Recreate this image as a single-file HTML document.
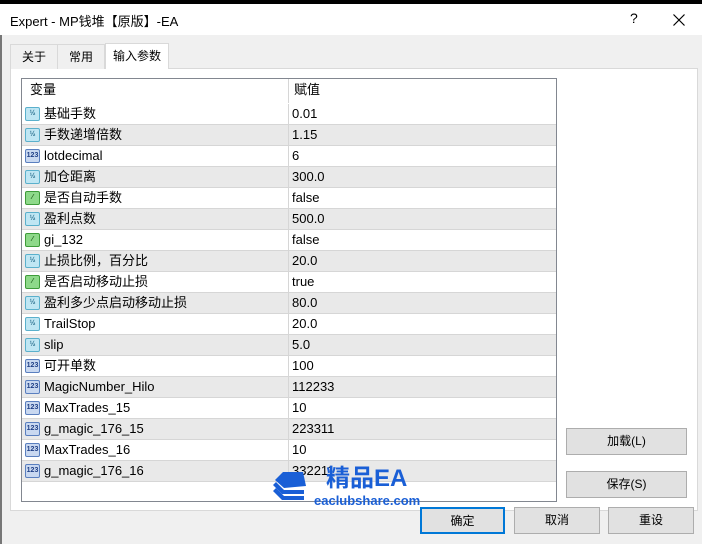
<!DOCTYPE html>
<html><head><meta charset="utf-8"><style>
*{box-sizing:border-box;margin:0;padding:0}
body{width:702px;height:544px;background:#f0f0f0;position:relative;overflow:hidden;font-family:"Liberation Sans","Noto Sans CJK SC",sans-serif;font-size:13px;color:#000}
.abs{position:absolute}
.top{left:0;top:0;width:702px;height:4px;background:#000}
.title{left:0;top:4px;width:702px;height:31px;background:#fff;font-size:13px}
.tab{top:44px;height:25px;border:1px solid #d9d9d9;border-bottom:none;background:#f0f0f0;text-align:center;line-height:24px;font-size:12px}
.panel{left:10px;top:68px;width:688px;height:443px;background:#fff;border:1px solid #d9d9d9}
.list{left:21px;top:78px;width:536px;height:424px;border:1px solid #828790;background:#fff;overflow:hidden}
.row{position:absolute;left:0;width:534px;height:21px;border-bottom:1px solid #d6d6d6;line-height:20px}
.row.g{background:#e9e9e9}
.c1{position:absolute;left:22px;top:0}
.c2{position:absolute;left:266px;top:0;border-left:1px solid #d6d6d6;padding-left:3px;height:21px}
.ic{position:absolute;left:3px;top:3px;width:15px;height:14px;border-radius:2px;font-size:7px;line-height:12px;text-align:center;font-weight:bold}
.d{background:#bfe6f3;border:1px solid #5ab0cc;color:#2a6f8e}
.n{background:#c9d8f0;border:1px solid #5a7fbf;color:#1f3f86}
.b{background:#8ed98a;border:1px solid #3e9c3a;color:#1b5a18}
.btn{height:27px;border:1px solid #adadad;background:#e1e1e1;text-align:center;line-height:25px;font-size:12px}
</style></head><body>
<div class="abs top"></div>
<div class="abs title"><span class="abs" style="left:10px;top:7px">Expert - MP钱堆【原版】-EA</span><span class="abs" style="left:630px;top:6px;font-size:14px">?</span><svg class="abs" style="left:673px;top:10px" width="12" height="12"><path d="M0.5 0.5L11.5 11.5M11.5 0.5L0.5 11.5" stroke="#000" stroke-width="1.2"/></svg></div>
<div class="abs" style="left:0;top:35px;width:2px;height:509px;background:#777"></div>
<div class="abs panel"></div>
<div class="abs tab" style="left:10px;width:48px">关于</div>
<div class="abs tab" style="left:57px;width:48px">常用</div>
<div class="abs tab" style="left:105px;width:64px;background:#fff;top:43px;height:26px">输入参数</div>
<div class="abs list">
<div class="row" style="top:0;height:24px;line-height:22px;border-bottom:none"><span class="c1" style="left:8px">变量</span><span class="c2" style="height:24px;padding-left:5px">赋值</span></div>
<div class="row" style="top:25px"><span class="ic d">½</span><span class="c1">基础手数</span><span class="c2">0.01</span></div>
<div class="row g" style="top:46px"><span class="ic d">½</span><span class="c1">手数递增倍数</span><span class="c2">1.15</span></div>
<div class="row" style="top:67px"><span class="ic n">123</span><span class="c1">lotdecimal</span><span class="c2">6</span></div>
<div class="row g" style="top:88px"><span class="ic d">½</span><span class="c1">加仓距离</span><span class="c2">300.0</span></div>
<div class="row" style="top:109px"><span class="ic b">⁄</span><span class="c1">是否自动手数</span><span class="c2">false</span></div>
<div class="row g" style="top:130px"><span class="ic d">½</span><span class="c1">盈利点数</span><span class="c2">500.0</span></div>
<div class="row" style="top:151px"><span class="ic b">⁄</span><span class="c1">gi_132</span><span class="c2">false</span></div>
<div class="row g" style="top:172px"><span class="ic d">½</span><span class="c1">止损比例，百分比</span><span class="c2">20.0</span></div>
<div class="row" style="top:193px"><span class="ic b">⁄</span><span class="c1">是否启动移动止损</span><span class="c2">true</span></div>
<div class="row g" style="top:214px"><span class="ic d">½</span><span class="c1">盈利多少点启动移动止损</span><span class="c2">80.0</span></div>
<div class="row" style="top:235px"><span class="ic d">½</span><span class="c1">TrailStop</span><span class="c2">20.0</span></div>
<div class="row g" style="top:256px"><span class="ic d">½</span><span class="c1">slip</span><span class="c2">5.0</span></div>
<div class="row" style="top:277px"><span class="ic n">123</span><span class="c1">可开单数</span><span class="c2">100</span></div>
<div class="row g" style="top:298px"><span class="ic n">123</span><span class="c1">MagicNumber_Hilo</span><span class="c2">112233</span></div>
<div class="row" style="top:319px"><span class="ic n">123</span><span class="c1">MaxTrades_15</span><span class="c2">10</span></div>
<div class="row g" style="top:340px"><span class="ic n">123</span><span class="c1">g_magic_176_15</span><span class="c2">223311</span></div>
<div class="row" style="top:361px"><span class="ic n">123</span><span class="c1">MaxTrades_16</span><span class="c2">10</span></div>
<div class="row g" style="top:382px"><span class="ic n">123</span><span class="c1">g_magic_176_16</span><span class="c2">332211</span></div>
</div>
<svg class="abs" style="left:270px;top:470px" width="40" height="34" viewBox="0 0 40 34"><path d="M3 21 L12 30 L34 30 L34 26 L14 26 L6 18Z" fill="#1a5fd6"/><path d="M3 15 L12 24 L34 24 L34 20 L14 20 L6 12Z" fill="#1a5fd6"/><path d="M5 10 L13 2 L33 2 L36 16 L14 18 Z" fill="#1a5fd6"/></svg>
<div class="abs" style="left:326px;top:464px;font-size:24px;font-weight:bold;color:#1a5fd6;line-height:30px">精品EA</div>
<div class="abs" style="left:314px;top:494px;font-size:13px;font-weight:bold;color:#1a5fd6;line-height:14px">eaclubshare.com</div>
<div class="abs btn" style="left:566px;top:428px;width:121px">加载(L)</div>
<div class="abs btn" style="left:566px;top:471px;width:121px">保存(S)</div>
<div class="abs btn" style="left:420px;top:507px;width:85px;border:2px solid #0078d7">确定</div>
<div class="abs btn" style="left:514px;top:507px;width:86px">取消</div>
<div class="abs btn" style="left:608px;top:507px;width:86px">重设</div>
</body></html>
